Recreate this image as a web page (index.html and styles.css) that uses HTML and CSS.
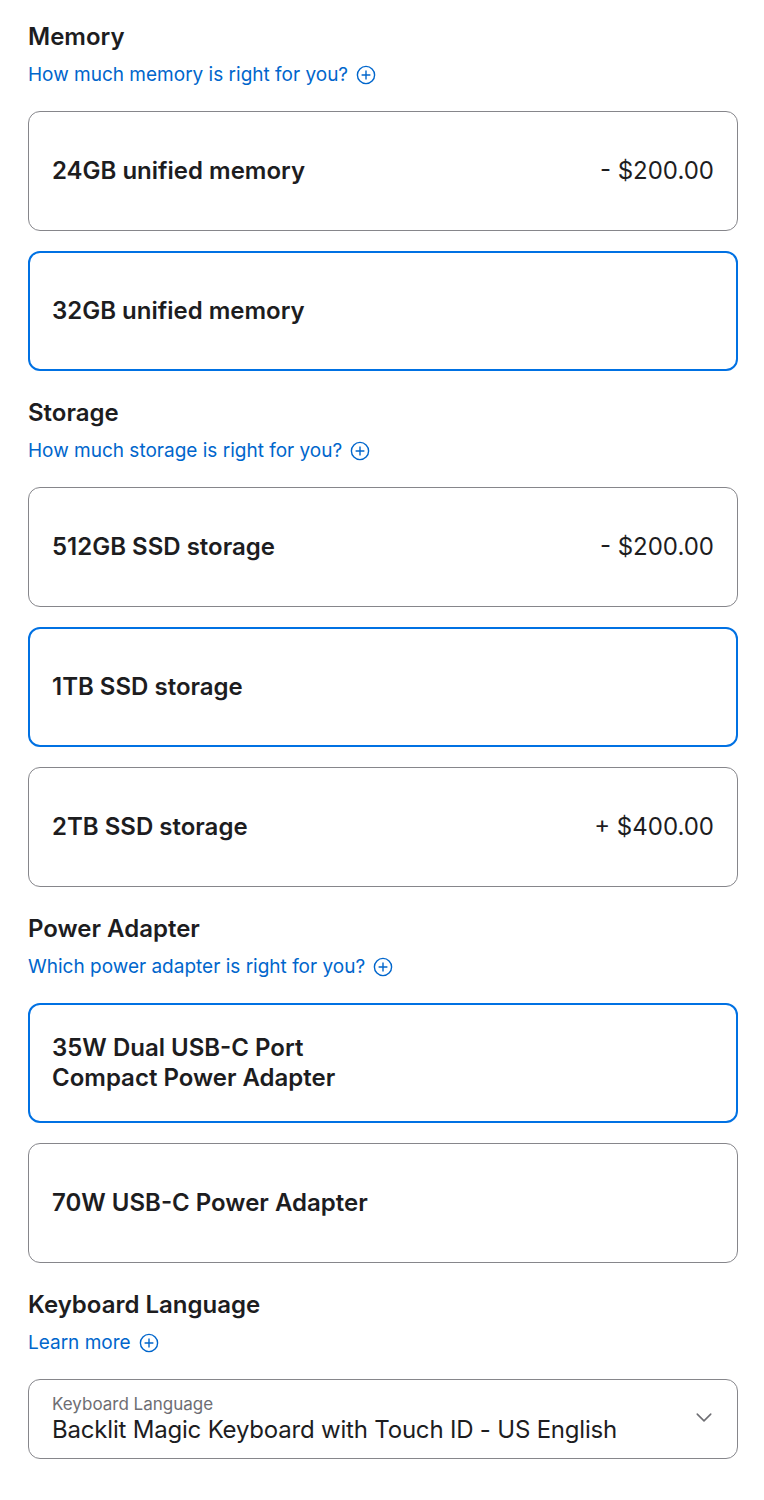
FILE: index.html
```html
<!DOCTYPE html>
<html lang="en">
<head>
  <meta charset="UTF-8" />
  <meta name="viewport" content="width=device-width, initial-scale=1.0"/>
  <title>Configure</title>
  <link rel="stylesheet" href="styles.css">
</head>
<body>
  <main class="config">

    <section class="group">
      <h2 class="group-title">Memory</h2>
      <a class="help-link" href="#">How much memory is right for you?
        <svg class="plus-icon" viewBox="0 0 20 20"><circle cx="10" cy="10" r="8.6"/><path d="M10 5.6v8.8M5.6 10h8.8"/></svg>
      </a>
      <div class="options">
        <div class="option">
          <span class="option-name">24GB unified memory</span>
          <span class="option-price">- $200.00</span>
        </div>
        <div class="option selected">
          <span class="option-name">32GB unified memory</span>
        </div>
      </div>
    </section>

    <section class="group">
      <h2 class="group-title">Storage</h2>
      <a class="help-link" href="#">How much storage is right for you?
        <svg class="plus-icon" viewBox="0 0 20 20"><circle cx="10" cy="10" r="8.6"/><path d="M10 5.6v8.8M5.6 10h8.8"/></svg>
      </a>
      <div class="options">
        <div class="option">
          <span class="option-name">512GB SSD storage</span>
          <span class="option-price">- $200.00</span>
        </div>
        <div class="option selected">
          <span class="option-name">1TB SSD storage</span>
        </div>
        <div class="option">
          <span class="option-name">2TB SSD storage</span>
          <span class="option-price">+ $400.00</span>
        </div>
      </div>
    </section>

    <section class="group">
      <h2 class="group-title">Power Adapter</h2>
      <a class="help-link" href="#">Which power adapter is right for you?
        <svg class="plus-icon" viewBox="0 0 20 20"><circle cx="10" cy="10" r="8.6"/><path d="M10 5.6v8.8M5.6 10h8.8"/></svg>
      </a>
      <div class="options">
        <div class="option selected">
          <span class="option-name">35W Dual USB-C Port<br>Compact Power Adapter</span>
        </div>
        <div class="option">
          <span class="option-name">70W USB-C Power Adapter</span>
        </div>
      </div>
    </section>

    <section class="group">
      <h2 class="group-title">Keyboard Language</h2>
      <a class="help-link" href="#">Learn more
        <svg class="plus-icon" viewBox="0 0 20 20"><circle cx="10" cy="10" r="8.6"/><path d="M10 5.6v8.8M5.6 10h8.8"/></svg>
      </a>
      <div class="select-box">
        <div class="select-text">
          <span class="select-label">Keyboard Language</span>
          <span class="select-value">Backlit Magic Keyboard with Touch ID - US English</span>
        </div>
        <svg class="chevron" viewBox="0 0 14 8"><path d="M1 1l6 6 6-6"/></svg>
      </div>
    </section>

  </main>
</body>
</html>
```

FILE: styles.css
```css
:root {
  --text-color: #1d1d1f;
  --link-color: #0066cc;
  --selected-color: #0071e3;
  --border-color: #86868b;
  --muted-color: #6e6e73;
}

* {
  box-sizing: border-box;
  margin: 0;
  padding: 0;
  font-family: Inter, 'Liberation Sans', sans-serif;
}

body {
  background-color: white;
  color: var(--text-color);
}

.config {
  display: flex;
  flex-direction: column;
  gap: 27px;
  padding: 22px 26px 40px 28px;
}

.group {
  display: flex;
  flex-direction: column;
}

.group-title {
  font-size: 24px;
  line-height: 30px;
  font-weight: 600;
}

.help-link {
  display: flex;
  align-items: center;
  gap: 8px;
  margin-top: 10px;
  color: var(--link-color);
  text-decoration: none;
  font-size: 19px;
  line-height: 26px;
}

.plus-icon {
  width: 20px;
  height: 20px;
  fill: none;
  stroke: var(--link-color);
  stroke-width: 1.4;
}

.options {
  display: flex;
  flex-direction: column;
  gap: 20px;
  margin-top: 23px;
}

.option {
  display: flex;
  justify-content: space-between;
  align-items: center;
  height: 120px;
  padding: 0 23px;
  border: 1px solid var(--border-color);
  border-radius: 12px;
  font-size: 24px;
  line-height: 30px;
}

.option.selected {
  border: 2px solid var(--selected-color);
  padding: 0 22px;
}

.option-name {
  font-weight: 600;
}

.option-price {
  font-weight: 400;
}

.select-box {
  display: flex;
  justify-content: space-between;
  align-items: center;
  height: 80px;
  margin-top: 23px;
  padding: 0 25px 0 23px;
  border: 1px solid var(--border-color);
  border-radius: 12px;
}

.select-text {
  display: flex;
  flex-direction: column;
}

.select-label {
  color: var(--muted-color);
  font-size: 17px;
  line-height: 22px;
}

.select-value {
  font-size: 24px;
  line-height: 30px;
  letter-spacing: -0.2px;
}

.chevron {
  width: 16px;
  height: 9px;
  margin-top: -4px;
  fill: none;
  stroke: var(--muted-color);
  stroke-width: 1.4;
  stroke-linecap: round;
  stroke-linejoin: round;
}
```
